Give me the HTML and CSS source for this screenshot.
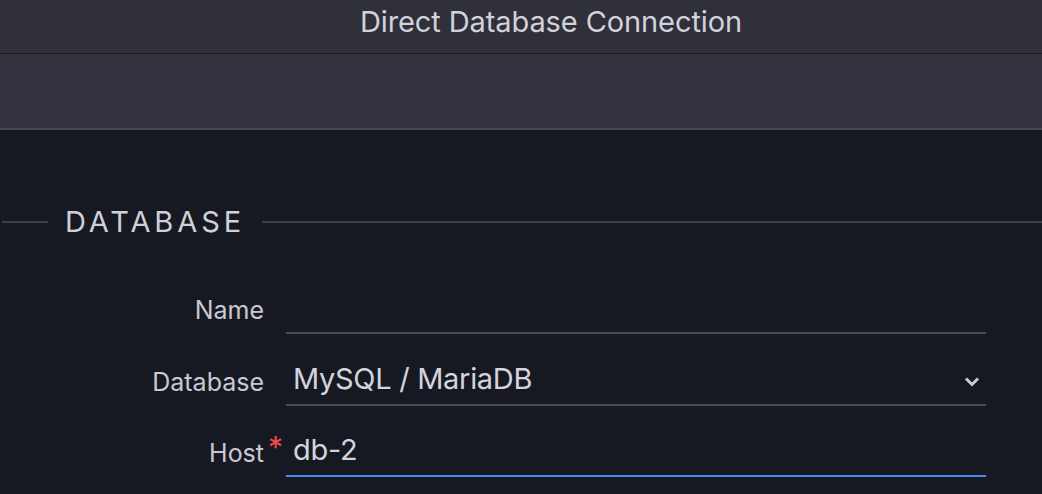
FILE: index.html
```
<!DOCTYPE html>
<html>
<head>
<meta charset="utf-8">
<link rel="stylesheet" href="styles.css">
</head>
<body>
<div class="titlebar"><span class="title">Direct Database Connection</span></div>
<div class="toolbar"></div>
<main class="content">
  <div class="legend">
    <span class="legend-line-left"></span>
    <span class="legend-text">DATABASE</span>
    <span class="legend-line-right"></span>
  </div>
  <div class="rows">
    <div class="row">
      <label class="label">Name</label>
      <div class="field"></div>
    </div>
    <div class="row">
      <label class="label">Database</label>
      <div class="field select">
        <span class="value">MySQL / MariaDB</span>
        <svg class="chevron" width="16" height="11" viewBox="0 0 16 11"><path d="M2 2.5 L8 8.5 L14 2.5" fill="none" stroke="#c9cbd6" stroke-width="3"/></svg>
      </div>
    </div>
    <div class="row">
      <label class="label required">Host<span class="asterisk">*</span></label>
      <div class="field focused"><span class="value">db-2</span></div>
    </div>
  </div>
</main>
</body>
</html>
```
FILE: styles.css
```
html, body {
  margin: 0;
  padding: 0;
  background: #171922;
  font-family: Inter, "Noto Sans", "Liberation Sans", sans-serif;
  overflow: hidden;
}
.titlebar {
  height: 53px;
  background: #2f303a;
  border-bottom: 1px solid #1a1b22;
  display: flex;
  justify-content: center;
  align-items: center;
  padding-left: 60px;
  box-sizing: content-box;
}
.title {
  color: #d2d2dc;
  font-size: 29px;
  letter-spacing: -0.1px;
  position: relative;
  top: -5px;
}
.toolbar {
  height: 74px;
  background: #31323d;
  border-bottom: 2px solid #454651;
}
.content {
  padding-top: 74px;
}
.legend {
  display: flex;
  align-items: center;
}
.legend-line-left {
  width: 46px;
  margin-left: 2px;
  height: 2px;
  background: #3e3f49;
}
.legend-text {
  margin-left: 17px;
  margin-right: 17px;
  font-size: 29px;
  letter-spacing: 3.9px;
  color: #d0d0da;
}
.legend-line-right {
  flex: 1;
  height: 2px;
  background: #3e3f49;
}
.rows {
  margin-top: 45px;
  display: flex;
  flex-direction: column;
  gap: 21.5px;
}
.row {
  display: flex;
  align-items: flex-end;
}
.label {
  width: 264px;
  text-align: right;
  font-size: 25px;
  color: #c9c9d3;
  padding-bottom: 9px;
  padding-right: 22px;
  box-sizing: content-box;
  position: relative;
}
.asterisk {
  position: absolute;
  right: 3px;
  top: -9px;
  color: #f24b4b;
  font-size: 30px;
}
.field {
  width: 693px;
  height: 48px;
  border-bottom: 2px solid #4a4b55;
  padding-left: 7px;
  display: flex;
  align-items: flex-end;
  padding-bottom: 0;
}
.field.focused {
  border-bottom-color: #3d8ef0;
}
.value {
  font-size: 29px;
  letter-spacing: -0.3px;
  line-height: 36px;
  color: #d4d4de;
  padding-bottom: 7px;
}
.select {
  justify-content: space-between;
}
.chevron {
  margin-right: 6px;
  margin-bottom: 17px;
}
```
